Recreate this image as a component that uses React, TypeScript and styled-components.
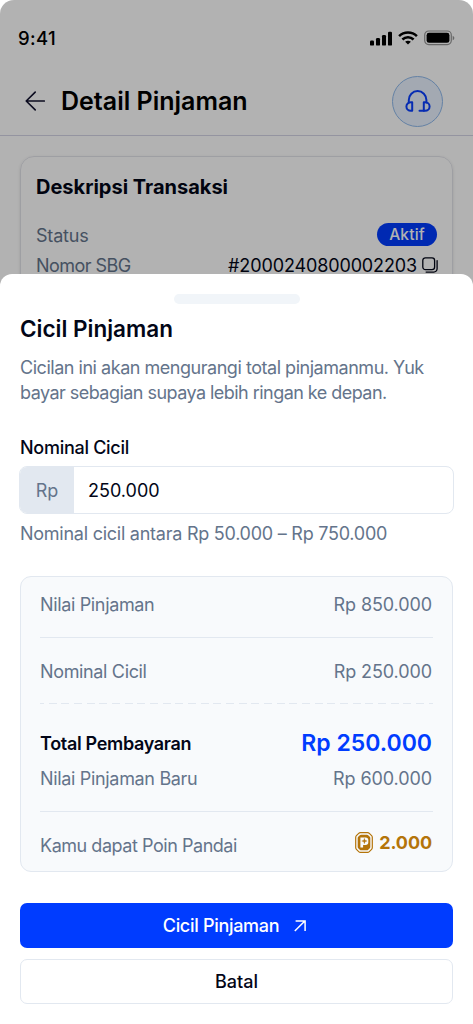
import React from "react";
import styled, { createGlobalStyle } from "styled-components";

const GlobalStyle = createGlobalStyle`
  *, *::before, *::after { box-sizing: border-box; }
  body { margin: 0; background: #fff; font-family: Inter, "Liberation Sans", sans-serif; }
  h1, h2, p { margin: 0; }
`;

const ink = "#020617";
const muted = "#64748b";
const line = "#e2e8f0";
const blue = "#003cff";
const gold = "#b4740a";

const Screen = styled.main`
  position: relative;
  width: 473px;
  height: 1024px;
  overflow: hidden;
  border-radius: 14px 14px 0 0;
  background: #fff;
  color: ${ink};
`;

const Text = styled.span<{ $size?: number; $weight?: number; $track?: number; $color?: string }>`
  font-size: ${(p) => p.$size ?? 18}px;
  font-weight: ${(p) => p.$weight ?? 400};
  letter-spacing: ${(p) => p.$track ?? 0}px;
  color: ${(p) => p.$color ?? muted};
  white-space: nowrap;
`;

const StatusBar = styled.div`
  display: flex;
  align-items: center;
  justify-content: space-between;
  height: 67px;
  padding: 9px 18px 0 18px;
`;

const StatusIcons = styled.div`
  display: flex;
  align-items: center;
  gap: 6px;
  svg { display: block; }
`;

const Header = styled.header`
  display: flex;
  align-items: center;
  height: 69px;
  padding: 0 30px 0 25px;
  border-bottom: 1px solid #d5d5e6;
`;

const HeaderTitle = styled(Text).attrs({ as: "h1" })`
  flex: 1;
  margin-left: 16px;
`;

const HelpButton = styled.button`
  display: grid;
  place-items: center;
  width: 51px;
  height: 51px;
  padding: 0;
  border: 1px solid #8fb9ec;
  border-radius: 50%;
  background: #eaf3ff;
`;

const DetailCard = styled.section`
  display: flex;
  flex-direction: column;
  height: 180px;
  margin: 20px 20px 0;
  padding: 18px 15px;
  border: 1px solid #e3e4ea;
  border-radius: 14px;
  box-shadow: 0 1px 3px rgba(0, 0, 0, 0.12);
`;

const DetailRow = styled.div<{ $top?: number }>`
  display: flex;
  align-items: center;
  justify-content: space-between;
  height: 30px;
  margin-top: ${(p) => p.$top ?? 0}px;
`;

const Badge = styled.span`
  display: flex;
  align-items: center;
  justify-content: center;
  width: 60px;
  height: 23px;
  margin-top: -2px;
  border-radius: 12px;
  background: ${blue};
`;

const LoanNumber = styled.span`
  display: flex;
  align-items: center;
  gap: 5px;
  margin-right: -1px;
`;

const Backdrop = styled.div`
  position: absolute;
  inset: 0;
  background: rgba(0, 0, 0, 0.3);
`;

const Sheet = styled.section`
  position: absolute;
  inset: 273.5px 0 0;
  display: flex;
  flex-direction: column;
  padding: 20.5px 20px 0;
  border-radius: 12px 12px 0 0;
  background: #fff;
`;

const Handle = styled.div`
  align-self: center;
  width: 126px;
  height: 10px;
  border-radius: 5px;
  background: #f1f5f9;
`;

const SheetTitle = styled(Text).attrs({ as: "h2" })`
  margin-top: 9px;
  line-height: 32px;
`;

const Description = styled.p`
  display: flex;
  flex-direction: column;
  margin-top: 10px;
  line-height: 25px;
`;

const Field = styled.div`
  display: flex;
  flex-direction: column;
  margin-top: 30px;
`;

const Label = styled(Text)`
  line-height: 26px;
`;

const InputBox = styled.div`
  display: flex;
  height: 48px;
  margin: 5px -1px 0;
  overflow: hidden;
  border: 1px solid ${line};
  border-radius: 8px;
`;

const Prefix = styled.div`
  display: grid;
  place-items: center;
  width: 54px;
  background: ${line};
`;

const Value = styled.div`
  display: flex;
  align-items: center;
  padding-left: 14px;
`;

const Helper = styled(Text)`
  margin-top: 7px;
  line-height: 26px;
`;

const Summary = styled.div`
  display: flex;
  flex: none;
  flex-direction: column;
  height: 296px;
  margin-top: 29px;
  padding: 0 19px;
  border: 1.5px solid ${line};
  border-radius: 11px;
  background: #f8fafc;
`;

const Row = styled.div<{ $height: number; $top?: number }>`
  display: flex;
  flex: none;
  align-items: center;
  justify-content: space-between;
  height: ${(p) => p.$height}px;
  margin-top: ${(p) => p.$top ?? 0}px;
  padding-right: 1px;
`;

const Rule = styled.div<{ $top?: number }>`
  flex: none;
  height: 1px;
  margin-top: ${(p) => p.$top ?? 0}px;
  background: ${line};
`;

const DashedRule = styled.div`
  flex: none;
  height: 1px;
  background: repeating-linear-gradient(90deg, ${line} 0 8px, transparent 8px 12.67px) -4px 0;
`;

const Points = styled.span`
  display: flex;
  align-items: center;
  gap: 6px;
  margin-top: -5px;
`;

const Button = styled.button<{ $primary?: boolean }>`
  display: flex;
  flex: none;
  align-items: center;
  justify-content: center;
  gap: 15px;
  height: 45px;
  margin-top: ${(p) => (p.$primary ? 31 : 11)}px;
  padding: ${(p) => (p.$primary ? "0 4px 0 0" : "0")};
  border: ${(p) => (p.$primary ? "0" : `1px solid ${line}`)};
  border-radius: 7px;
  background: ${(p) => (p.$primary ? blue : "#fff")};
  font-family: inherit;
`;

const Signal = () => (
  <svg width="22" height="15" viewBox="0 0 22 15">
    <rect x="0" y="9.6" width="4" height="5" rx="1.2" />
    <rect x="6" y="7" width="4" height="7.6" rx="1.2" />
    <rect x="12" y="4" width="4" height="10.6" rx="1.2" />
    <rect x="18" y="0.8" width="4" height="13.8" rx="1.2" />
  </svg>
);

const Wifi = () => (
  <svg width="20" height="14" viewBox="0 0 20 14" fill="none" stroke="#000" strokeWidth="2.5">
    <path d="M1.1 5.2C6 .3 14 .3 18.9 5.2" />
    <path d="M4.4 8.5c3.1-3 8.1-3 11.2 0" />
    <path d="M10 13.6 7.1 10.8c1.6-1.4 4.2-1.4 5.8 0Z" fill="#000" stroke="none" />
  </svg>
);

const Battery = () => (
  <svg width="31" height="16" viewBox="0 0 31 16">
    <rect x="0.7" y="1" width="26.6" height="13.6" rx="4" fill="none" stroke="#000" strokeOpacity=".42" strokeWidth="1.2" />
    <rect x="2.6" y="2.8" width="22.8" height="10" rx="2.4" />
    <path d="M28.7 5.7v4.6c1-.4 1.6-1.3 1.6-2.3s-.6-1.9-1.6-2.3Z" opacity=".42" />
  </svg>
);

const BackArrow = () => (
  <svg width="20" height="20" viewBox="0 0 20 20" fill="none" stroke="#12122e" strokeWidth="1.6" strokeLinecap="round" strokeLinejoin="round">
    <path d="M19.3 10H1.2M10.2 1.1 1.2 10l9 8.9" />
  </svg>
);

const Headset = () => (
  <svg width="26" height="22" viewBox="0 0 26 22" fill="none" stroke="#0a3fff" strokeWidth="2" strokeLinecap="round" strokeLinejoin="round">
    <path d="M3.8 12.4V10C3.8 5.1 7.7 1.1 12.6 1.1S21.4 5.1 21.4 10v2.4" />
    <path d="M7.2 12.2v8.6H5.9c-2.6 0-4.5-1.9-4.5-4.3s1.9-4.3 4.5-4.3Z" />
    <path d="M18.8 12.2h1.3c2.6 0 4.5 1.9 4.5 4.3s-1.9 4.3-4.5 4.3h-1.3Z" />
    <path d="M18.8 20.8h-4.3" />
  </svg>
);

const Copy = () => (
  <svg width="16" height="16" viewBox="0 0 16 16" fill="none" stroke="#020617" strokeWidth="1.3" strokeLinecap="round">
    <rect x="0.8" y="0.8" width="11.8" height="11.8" rx="2.6" />
    <path d="M15.1 3.6v8.2a3.3 3.3 0 0 1-3.3 3.3H4.1" />
  </svg>
);

const Coin = () => (
  <svg width="18" height="21" viewBox="0 0 18 21" fill="none">
    <path d="M5.4.7h7.2q1 0 1.7.7l2.3 2.3q.7.7.7 1.7v10.2q0 1-.7 1.7l-2.3 2.3q-.7.7-1.7.7H5.4q-1 0-1.7-.7l-2.3-2.3q-.7-.7-.7-1.7V5.4q0-1 .7-1.7l2.3-2.3q.7-.7 1.7-.7Z" stroke={gold} strokeWidth="1.2" />
    <path d="M6 2.7h6q.7 0 1.2.5l1.6 1.6q.5.5.5 1.2v9q0 .7-.5 1.2l-1.6 1.6q-.5.5-1.2.5H6q-.7 0-1.2-.5l-1.6-1.6q-.5-.5-.5-1.2V6q0-.7.5-1.2l1.6-1.6q.5-.5 1.2-.5Z" fill={gold} />
    <path d="M5.4 5.4h5.2q2.7 0 2.7 2.7v2.1q0 2.7-2.7 2.7H8.1v2.6H5.4Z" fill="#f8fafc" />
    <path d="M9.4 6.3 10.1 8.3 12.1 9 10.1 9.7 9.4 11.7 8.7 9.7 6.7 9 8.7 8.3Z" fill={gold} stroke={gold} strokeWidth=".3" />
  </svg>
);

const ArrowUpRight = () => (
  <svg width="12" height="12" viewBox="0 0 12 12" fill="none" stroke="#fff" strokeWidth="1.5">
    <path d="M.8 11 10.6 1.2M1.6 1.1h9.5v9.8" />
  </svg>
);

export default function App() {
  return (
    <>
      <GlobalStyle />
      <Screen>
        <StatusBar>
          <Text $size={18.5} $weight={500} $track={0.4} $color="#000">9:41</Text>
          <StatusIcons>
            <Signal />
            <Wifi />
            <Battery />
          </StatusIcons>
        </StatusBar>
        <Header>
          <BackArrow />
          <HeaderTitle $size={25} $weight={600} $color="#000">Detail Pinjaman</HeaderTitle>
          <HelpButton aria-label="Bantuan"><Headset /></HelpButton>
        </Header>
        <DetailCard>
          <Text $size={20} $weight={700} $color={ink}>Deskripsi Transaksi</Text>
          <DetailRow $top={21}>
            <Text $track={-0.2}>Status</Text>
            <Badge><Text $size={15.5} $weight={500} $track={0.2} $color="#fff">Aktif</Text></Badge>
          </DetailRow>
          <DetailRow>
            <Text $track={-0.55}>Nomor SBG</Text>
            <LoanNumber>
              <Text $track={-0.13} $color={ink}>#2000240800002203</Text>
              <Copy />
            </LoanNumber>
          </DetailRow>
        </DetailCard>
        <Backdrop />
        <Sheet>
          <Handle />
          <SheetTitle $size={22.5} $weight={600} $color={ink}>Cicil Pinjaman</SheetTitle>
          <Description>
            <Text $track={-0.47}>Cicilan ini akan mengurangi total pinjamanmu. Yuk</Text>
            <Text $track={-0.54}>bayar sebagian supaya lebih ringan ke depan.</Text>
          </Description>
          <Field>
            <Label $weight={500} $track={-0.28} $color={ink}>Nominal Cicil</Label>
            <InputBox>
              <Prefix><Text>Rp</Text></Prefix>
              <Value><Text $color={ink}>250.000</Text></Value>
            </InputBox>
            <Helper $track={-0.25}>Nominal cicil antara Rp 50.000 – Rp 750.000</Helper>
          </Field>
          <Summary>
            <Row $height={55}>
              <Text $track={-0.35}>Nilai Pinjaman</Text>
              <Text $track={-0.1}>Rp 850.000</Text>
            </Row>
            <Rule $top={5} />
            <Row $height={64} $top={1}>
              <Text $track={-0.35}>Nominal Cicil</Text>
              <Text $track={-0.1}>Rp 250.000</Text>
            </Row>
            <DashedRule />
            <Row $height={36} $top={21}>
              <Text $weight={600} $track={-0.32} $color={ink}>Total Pembayaran</Text>
              <Text $size={23} $weight={600} $color={blue}>Rp 250.000</Text>
            </Row>
            <Row $height={35}>
              <Text $track={-0.33}>Nilai Pinjaman Baru</Text>
              <Text $track={-0.1}>Rp 600.000</Text>
            </Row>
            <Rule $top={15} />
            <Row $height={52} $top={7}>
              <Text $track={-0.46}>Kamu dapat Poin Pandai</Text>
              <Points>
                <Coin />
                <Text $weight={700} $track={-0.1} $color={gold}>2.000</Text>
              </Points>
            </Row>
          </Summary>
          <Button $primary>
            <Text $weight={500} $track={-0.3} $color="#fff">Cicil Pinjaman</Text>
            <ArrowUpRight />
          </Button>
          <Button>
            <Text $weight={500} $color={ink}>Batal</Text>
          </Button>
        </Sheet>
      </Screen>
    </>
  );
}
